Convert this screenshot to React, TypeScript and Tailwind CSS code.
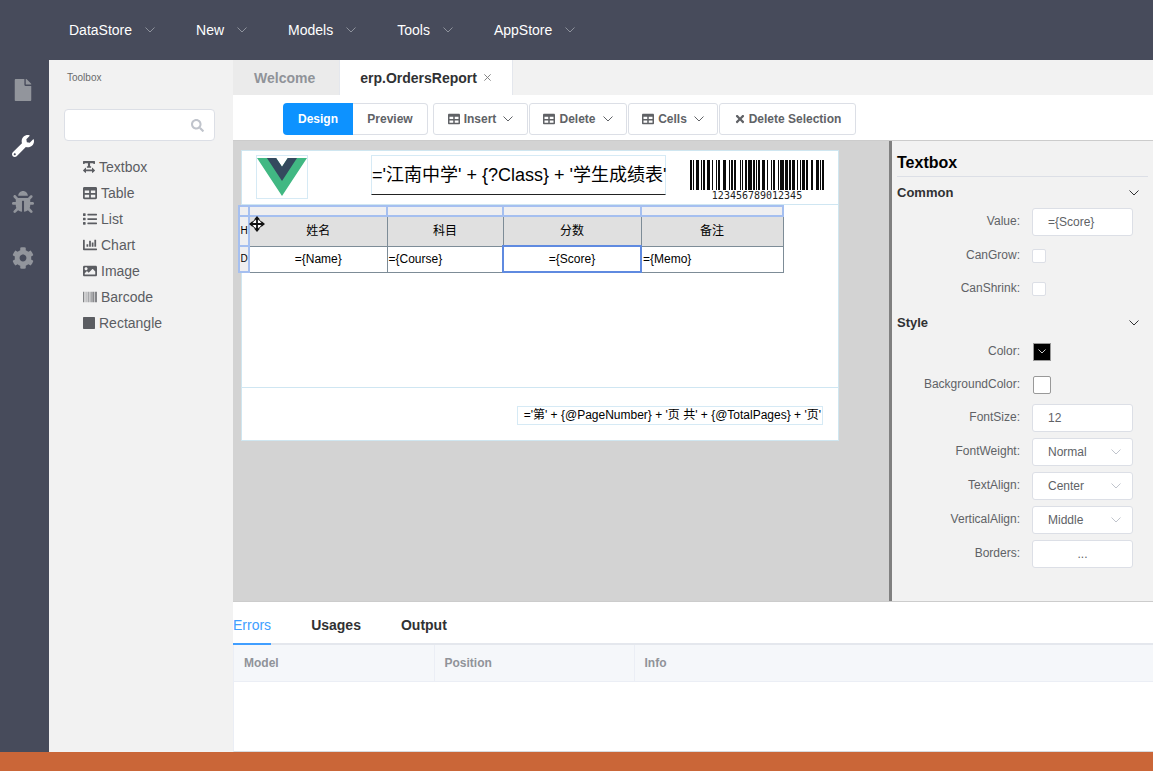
import React, { useId, useState } from "react";
import {
  FaBarcode,
  FaBug,
  FaChartBar,
  FaCog,
  FaFile,
  FaImage,
  FaList,
  FaSearch,
  FaSquareFull,
  FaTable,
  FaTextWidth,
  FaTimes,
  FaWrench,
} from "react-icons/fa";

type IconType = React.ComponentType<{ className?: string }>;

function Chevron({ className = "" }: { className?: string }) {
  return (
    <svg viewBox="0 0 10 6" className={`h-[6px] w-[10px] shrink-0 ${className}`} fill="none" stroke="currentColor" aria-hidden="true">
      <path d="M0.5 0.5 5 5 9.5 0.5" />
    </svg>
  );
}

const menus = ["DataStore", "New", "Models", "Tools", "AppStore"];

function TopMenu() {
  return (
    <header className="flex h-[60px] shrink-0 items-center bg-[#474b5b] pl-[49px]">
      <nav className="flex gap-px">
        {menus.map((m) => (
          <button key={m} type="button" className="flex items-center gap-[13px] px-5 text-sm text-white">
            {m}
            <Chevron className="text-[#8e929c]" />
          </button>
        ))}
      </nav>
    </header>
  );
}

const navItems: { label: string; icon: IconType; active?: boolean }[] = [
  { label: "Models", icon: FaFile },
  { label: "Toolbox", icon: FaWrench, active: true },
  { label: "Debug", icon: FaBug },
  { label: "Settings", icon: FaCog },
];

function SideNav() {
  return (
    <nav className="flex w-[49px] shrink-0 flex-col bg-[#474b5b] pt-[2px]">
      {navItems.map(({ label, icon: Icon, active }) => (
        <button
          key={label}
          type="button"
          aria-label={label}
          className={`flex h-14 items-center justify-center pr-[3px] text-[22px] ${active ? "text-white" : "text-[#92959c]"}`}
        >
          <Icon />
        </button>
      ))}
    </nav>
  );
}

const tools: { label: string; icon: IconType; iconClass: string }[] = [
  { label: "Textbox", icon: FaTextWidth, iconClass: "w-3" },
  { label: "Table", icon: FaTable, iconClass: "w-[14px]" },
  { label: "List", icon: FaList, iconClass: "w-[14px]" },
  { label: "Chart", icon: FaChartBar, iconClass: "w-[14px]" },
  { label: "Image", icon: FaImage, iconClass: "w-[14px]" },
  { label: "Barcode", icon: FaBarcode, iconClass: "w-[14px]" },
  { label: "Rectangle", icon: FaSquareFull, iconClass: "w-3 rounded-[2px]" },
];

function Toolbox() {
  return (
    <aside className="w-[184px] shrink-0 bg-[#f2f2f2] px-[15px]">
      <h2 className="px-[3px] pt-2 text-[10px] leading-5 text-[#6a6a6a]">Toolbox</h2>
      <label className="mt-[21px] flex h-8 w-[151px] items-center rounded border border-[#dcdfe6] bg-white pr-[10px] pl-3">
        <input type="text" aria-label="Search tools" className="min-w-0 flex-1 bg-transparent text-xs outline-none" />
        <FaSearch className="text-[13px] text-[#c0c4cc]" />
      </label>
      <ul className="mt-[13px] pl-[19px]">
        {tools.map(({ label, icon: Icon, iconClass }) => (
          <li key={label} className="flex h-[26px] items-center gap-1 text-sm text-[#5b5d62]">
            <Icon className={iconClass} />
            {label}
          </li>
        ))}
      </ul>
    </aside>
  );
}

function DocumentTabs() {
  return (
    <div className="flex h-[35px] shrink-0 bg-[#f2f2f2] text-sm font-bold">
      <button type="button" className="border-r border-[#e4e7ed] bg-[#ebebeb] pr-6 pl-[21px] text-[#909399]">
        Welcome
      </button>
      <div className="flex items-center gap-[6px] border-r border-[#e4e7ed] bg-white px-5 text-[#303133]">
        <button type="button">erp.OrdersReport</button>
        <button type="button" aria-label="Close erp.OrdersReport">
          <svg viewBox="0 0 10 10" className="size-[9px]" stroke="#777" fill="none">
            <path d="M1.5 1.5 8.5 8.5M8.5 1.5 1.5 8.5" />
          </svg>
        </button>
      </div>
    </div>
  );
}

function TableAction({ label, width }: { label: string; width: string }) {
  return (
    <button type="button" className={`flex h-8 items-center justify-center gap-1 rounded-[3px] border border-[#dcdfe6] bg-white ${width}`}>
      <FaTable />
      {label}
      <Chevron className="ml-[3px]" />
    </button>
  );
}

function Toolbar() {
  return (
    <div className="flex h-[45px] shrink-0 items-center bg-white pt-[3px] pl-[50px] text-xs font-bold text-[#606266]">
      <div className="mr-[5px] flex">
        <button type="button" className="h-8 w-[70px] rounded-l bg-[#0d92ff] text-white">
          Design
        </button>
        <button type="button" className="h-8 w-[75px] rounded-r border border-l-0 border-[#dcdfe6] bg-white">
          Preview
        </button>
      </div>
      <div className="flex gap-px">
        <TableAction label="Insert" width="w-[95px]" />
        <TableAction label="Delete" width="w-[98px]" />
        <TableAction label="Cells" width="w-[90px]" />
        <button type="button" className="flex h-8 w-[137px] items-center justify-center gap-[3px] rounded-[3px] border border-[#dcdfe6] bg-white">
          <FaTimes />
          Delete Selection
        </button>
      </div>
    </div>
  );
}

// Code 128 bar and gap widths: start C, seven digit pairs, code B, "5", checksum, stop.
const barcodeWidths = [
  "211232", "112232", "131123", "331121", "241112", "214121",
  "112232", "131123", "114131", "213212", "113123", "2331112",
].join("");

function Barcode() {
  const bars: { x: number; w: number }[] = [];
  let x = 0;
  barcodeWidths.split("").forEach((c, i) => {
    const w = Number(c);
    if (i % 2 === 0) bars.push({ x, w });
    x += w;
  });
  return (
    <figure className="flex flex-col items-center">
      <svg viewBox="0 0 134 30" className="h-[30px] w-[134px]" shapeRendering="crispEdges" aria-hidden="true">
        {bars.map((b) => (
          <rect key={b.x} x={b.x} y="0" width={b.w} height="30" fill="#0a0a0a" />
        ))}
      </svg>
      <figcaption className="font-['DejaVu_Sans_Mono',monospace] text-[10px] leading-3 text-[#222]">123456789012345</figcaption>
    </figure>
  );
}

function VueLogo() {
  return (
    <svg viewBox="0 0 256 221" preserveAspectRatio="none" className="h-[38px] w-[50px]" aria-label="Logo">
      <path d="M204.8 0H256L128 220.8 0 0h97.92L128 51.2 157.44 0z" fill="#41b883" />
      <path d="M50.56 0 128 133.12 204.8 0h-47.36L128 51.2 97.92 0z" fill="#34495e" />
    </svg>
  );
}

function MoveCursor({ className = "" }: { className?: string }) {
  return (
    <svg viewBox="0 0 18 18" className={`size-[18px] ${className}`} aria-hidden="true">
      <circle cx="9" cy="9" r="4.6" fill="#fff" stroke="#111" strokeWidth="1" />
      <path
        d="M9 1 12 4.6H9.9V8.1H13.4V6L17 9 13.4 12V9.9H9.9V13.4H12L9 17 6 13.4H8.1V9.9H4.6V12L1 9 4.6 6V8.1H8.1V4.6H6Z"
        fill="#111"
      />
    </svg>
  );
}

function ReportTable() {
  const handle = "border-2 border-[#a5bff0] bg-[#efeff1] p-0";
  const head = "border border-[#7d8c97] bg-[#e0e0e0] p-0 text-center";
  const cell = "border border-[#7d8c97] p-0";
  return (
    <table className="w-[544px] table-fixed border-collapse text-xs text-black">
      <colgroup>
        <col className="w-[10px]" />
        <col className="w-[138px]" />
        <col className="w-[116px]" />
        <col className="w-[138px]" />
        <col className="w-[142px]" />
      </colgroup>
      <tbody>
        <tr className="h-[10px] leading-none">
          <td className={handle} />
          <td className={handle} />
          <td className={handle} />
          <td className={handle} />
          <td className={handle} />
        </tr>
        <tr className="h-[30px]">
          <td className={`${handle} text-center text-[10px]`}>H</td>
          <td className={head}>姓名</td>
          <td className={head}>科目</td>
          <td className={head}>分数</td>
          <td className={head}>备注</td>
        </tr>
        <tr className="h-[26px]">
          <td className={`${handle} text-center text-[10px]`}>D</td>
          <td className={`${cell} text-center`}>={"{Name}"}</td>
          <td className={`${cell} pl-px`}>={"{Course}"}</td>
          <td className="border-2 border-[#5f8ae0] p-0 text-center">={"{Score}"}</td>
          <td className={`${cell} pl-px`}>={"{Memo}"}</td>
        </tr>
      </tbody>
    </table>
  );
}

function ReportCanvas() {
  return (
    <div className="min-w-0 flex-1 overflow-hidden bg-[#d3d3d3] pt-[9px] pl-2">
      <div className="relative w-[598px] border border-[#cfe6f0] bg-white text-black">
        <section className="h-[54px] border-b border-[#cfe6f2]" />
        <section className="h-[183px] border-b border-[#cfe6f2]" />
        <section className="h-[52px]" />
        <div className="absolute top-1 left-[14px] flex h-11 w-[52px] justify-center border border-[#d6eaf5] pt-[2px]">
          <VueLogo />
        </div>
        <div className="absolute top-1 left-[129px] h-10 w-[295px] border border-[#d6eaf5] border-b-[#222] text-[18px] leading-[38px] whitespace-nowrap">
          ='江南中学' + {"{?Class}"} + '学生成绩表'
        </div>
        <div className="absolute top-[9px] left-[448px]">
          <Barcode />
        </div>
        <div className="absolute top-[54px] -left-1">
          <ReportTable />
          <MoveCursor className="absolute top-[10px] left-[10px]" />
        </div>
        <div className="absolute top-[255px] left-[275px] h-[19px] w-[306px] border border-[#d6eaf5] pr-px text-right text-xs leading-[17px] whitespace-nowrap">
          ='第' + {"{@PageNumber}"} + '页 共' + {"{@TotalPages}"} + '页'
        </div>
      </div>
    </div>
  );
}

function GroupHeading({ children }: { children: React.ReactNode }) {
  return (
    <button type="button" className="flex h-7 w-full items-center justify-between pt-[3px] pr-[9px] text-[13px] font-bold text-[#303133]">
      {children}
      <Chevron />
    </button>
  );
}

function Field({ id, label, compact, children }: { id: string; label: string; compact?: boolean; children: React.ReactNode }) {
  return (
    <div className={`flex items-center ${compact ? "h-[33px]" : "h-[34px]"}`}>
      <label htmlFor={id} className="w-[123px] shrink-0 pb-[2px] text-right text-xs text-[#606266]">
        {label}:
      </label>
      <div className="ml-3 flex w-[101px] items-center">{children}</div>
    </div>
  );
}

const boxClass = "h-7 w-full rounded-[3px] border border-[#dcdfe6] bg-white px-[15px] text-xs text-[#606266] outline-none";

function TextField({ label, value }: { label: string; value: string }) {
  const id = useId();
  return (
    <Field id={id} label={label}>
      <input id={id} type="text" defaultValue={value} className={boxClass} />
    </Field>
  );
}

function CheckField({ label }: { label: string }) {
  const id = useId();
  return (
    <Field id={id} label={label} compact>
      <input id={id} type="checkbox" className="size-[14px] appearance-none rounded-[2px] border border-[#dcdfe6] bg-white checked:bg-[#409eff]" />
    </Field>
  );
}

function SelectField({ label, options }: { label: string; options: string[] }) {
  const id = useId();
  return (
    <Field id={id} label={label}>
      <div className="relative w-full">
        <select id={id} className={`${boxClass} appearance-none`}>
          {options.map((o) => (
            <option key={o}>{o}</option>
          ))}
        </select>
        <Chevron className="pointer-events-none absolute top-[11px] right-3 text-[#c0c4cc]" />
      </div>
    </Field>
  );
}

function Properties() {
  return (
    <aside className="w-[264px] shrink-0 border-l-[3px] border-[#808080] bg-[#f2f2f2] px-[5px]">
      <h2 className="flex h-9 items-center border-b border-[#dcdfe6] pt-2 text-base font-bold text-black">Textbox</h2>
      <GroupHeading>Common</GroupHeading>
      <TextField label="Value" value="={Score}" />
      <CheckField label="CanGrow" />
      <CheckField label="CanShrink" />
      <div className="pt-[2px]">
        <GroupHeading>Style</GroupHeading>
      </div>
      <Field id="text-color" label="Color" compact>
        <button id="text-color" type="button" className="ml-px flex size-[18px] items-center justify-center border border-[#999] bg-black text-white">
          <svg viewBox="0 0 8 5" className="h-[5px] w-2" fill="none" stroke="#ccc" aria-hidden="true">
            <path d="M0.5 0.5 4 4 7.5 0.5" />
          </svg>
        </button>
      </Field>
      <Field id="background-color" label="BackgroundColor" compact>
        <button id="background-color" type="button" className="ml-px size-[18px] rounded-[2px] border border-[#999] bg-white" />
      </Field>
      <TextField label="FontSize" value="12" />
      <SelectField label="FontWeight" options={["Normal", "Bold"]} />
      <SelectField label="TextAlign" options={["Center", "Left", "Right"]} />
      <SelectField label="VerticalAlign" options={["Middle", "Top", "Bottom"]} />
      <Field id="borders" label="Borders">
        <button id="borders" type="button" className={boxClass}>
          ...
        </button>
      </Field>
    </aside>
  );
}

function OutputPanel() {
  const [active, setActive] = useState("Errors");
  return (
    <section className="flex h-[150px] shrink-0 flex-col bg-white">
      <div className="flex h-[43px] shrink-0 gap-10 border-b-2 border-[#e4e7ed] text-sm">
        {["Errors", "Usages", "Output"].map((t) => (
          <button
            key={t}
            type="button"
            onClick={() => setActive(t)}
            className={`-mb-[2px] border-b-2 pt-[5px] ${active === t ? "border-[#409eff] text-[#409eff]" : "border-transparent font-bold text-[#303133]"}`}
          >
            {t}
          </button>
        ))}
      </div>
      <div className="flex-1 border-b border-l border-[#ebeef5] border-b-[#d8dade]">
        <table className="w-full table-fixed text-left text-xs font-bold text-[#909399]">
          <thead>
            <tr className="h-9 border-b border-[#ebeef5] bg-[#f5f7fa]">
              <th className="w-[200px] border-r border-[#ebeef5] px-[10px]">Model</th>
              <th className="w-[200px] border-r border-[#ebeef5] px-[10px]">Position</th>
              <th className="px-[10px]">Info</th>
            </tr>
          </thead>
        </table>
      </div>
    </section>
  );
}

export default function App() {
  return (
    <div className="flex min-h-screen flex-col bg-white font-['Liberation_Sans','Noto_Sans_CJK_SC',sans-serif]">
      <TopMenu />
      <div className="flex flex-1">
        <SideNav />
        <Toolbox />
        <main className="flex min-w-0 flex-1 flex-col">
          <DocumentTabs />
          <Toolbar />
          <div className="flex flex-1 border-y border-[#cccccc]">
            <ReportCanvas />
            <Properties />
          </div>
          <OutputPanel />
        </main>
      </div>
      <footer className="h-[19px] shrink-0 bg-[#ca6638]" />
    </div>
  );
}
